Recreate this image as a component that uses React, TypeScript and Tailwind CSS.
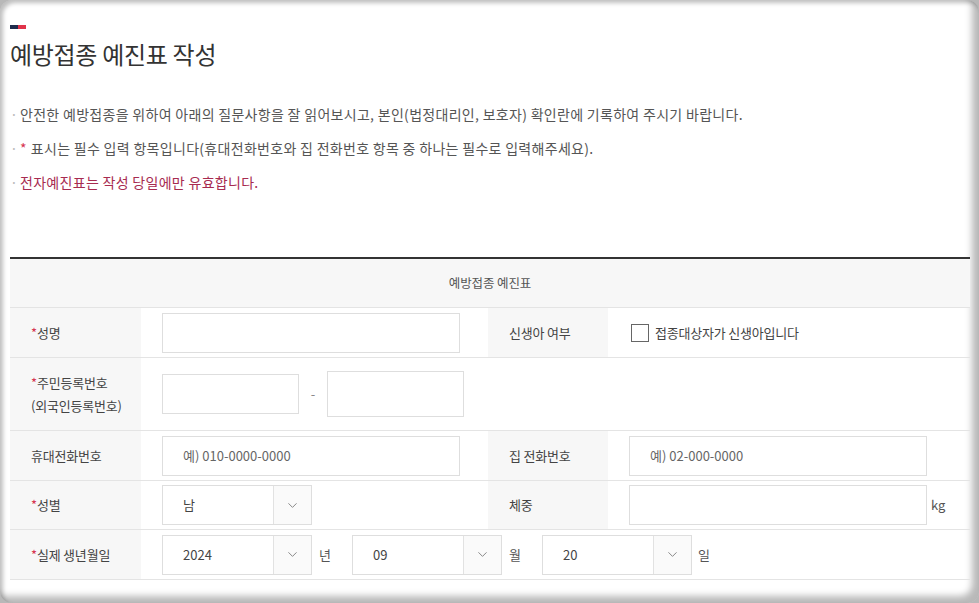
import { ChevronDown } from "lucide-react";

const font = { fontFamily: '"Noto Sans CJK KR", "Noto Sans", sans-serif' };

const Req = () => <span className="text-[#d6334f]">*</span>;

const LabelCell = ({ children, w }: { children: React.ReactNode; w: string }) => (
  <div className={`${w} flex h-full shrink-0 flex-col justify-center bg-[#f7f7f7] pl-[21px] text-[13px] tracking-[-0.2px] text-[#444]`}>
    {children}
  </div>
);

const TextBox = ({ w = "w-[298px]", h = "h-[40px]", placeholder = "" }: { w?: string; h?: string; placeholder?: string }) => (
  <div className={`${w} ${h} flex items-center border border-[#dedede] bg-white pl-[20px] text-[13px] tracking-[0px] text-[#666]`}>
    {placeholder}
  </div>
);

const SelectBox = ({ value }: { value: string }) => (
  <div className="flex h-[40px] w-[150px] border border-[#dedede] bg-white">
    <div className="flex flex-1 items-center pl-[20px] text-[13px] text-[#444]">{value}</div>
    <div className="flex w-[38px] items-center justify-center border-l border-[#e2e2e2] bg-[#fafafa]">
      <ChevronDown size={15} strokeWidth={1.4} className="text-[#777]" />
    </div>
  </div>
);

export default function App() {
  return (
    <div className="h-[603px] w-[979px] bg-[#b8b8b8]" style={font}>
      <div className="h-[603px] w-[979px] rounded-[12px] bg-white px-[10px] pt-[25px] shadow-[inset_3px_3px_4px_rgba(0,0,0,0.25),inset_-7px_-7px_7px_rgba(0,0,0,0.28)]">
        <div className="flex h-[4px] w-[16px]">
          <div className="w-1/2 bg-[#1f2c4c]" />
          <div className="w-1/2 bg-[#e0334a]" />
        </div>
        <h1 className="mt-[9px] text-[24px] leading-[32px] font-normal tracking-[-0.3px] text-[#333]">
          예방접종 예진표 작성
        </h1>
        <ul className="mt-[34px] space-y-[13px] text-[14px] leading-[21px] tracking-[0.3px]">
          <li className="flex text-[#555]">
            <span className="w-[10px] text-[#bbb]">·</span>
            안전한 예방접종을 위하여 아래의 질문사항을 잘 읽어보시고, 본인(법정대리인, 보호자) 확인란에 기록하여 주시기 바랍니다.
          </li>
          <li className="flex text-[#555]">
            <span className="w-[10px] text-[#bbb]">·</span>
            <span className="mr-[4px] text-[#d6334f]">*</span>표시는 필수 입력 항목입니다(휴대전화번호와 집 전화번호 항목 중 하나는 필수로 입력해주세요).
          </li>
          <li className="flex text-[#a72b50]">
            <span className="w-[10px] text-[#bbb]">·</span>
            전자예진표는 작성 당일에만 유효합니다.
          </li>
        </ul>

        <div className="mt-[64px] w-[960px] border-t-2 border-[#333]">
          <div className="flex h-[49px] items-center justify-center border-b border-[#e4e4e4] bg-[#f7f7f7] text-[12.5px] tracking-[-0.1px] text-[#555]">
            예방접종 예진표
          </div>

          <div className="flex h-[50px] items-center border-b border-[#e4e4e4]">
            <LabelCell w="w-[131px]">
              <div><Req />성명</div>
            </LabelCell>
            <div className="flex w-[347px] items-center pl-[21px]">
              <TextBox />
            </div>
            <LabelCell w="w-[120px]">신생아 여부</LabelCell>
            <div className="flex flex-1 items-center pl-[23px] text-[13px] tracking-[-0.2px] text-[#444]">
              <div className="mr-[6px] h-[18px] w-[18px] border border-[#666] bg-white" />
              접종대상자가 신생아입니다
            </div>
          </div>

          <div className="flex h-[73px] items-center border-b border-[#e4e4e4]">
            <LabelCell w="w-[131px]">
              <div className="leading-[23px]"><Req />주민등록번호</div>
              <div className="leading-[23px]">(외국인등록번호)</div>
            </LabelCell>
            <div className="flex flex-1 items-center pl-[21px]">
              <TextBox w="w-[137px]" />
              <span className="w-[28px] text-center text-[13px] text-[#888]">-</span>
              <TextBox w="w-[137px]" h="h-[46px]" />
            </div>
          </div>

          <div className="flex h-[50px] items-center border-b border-[#e4e4e4]">
            <LabelCell w="w-[131px]">휴대전화번호</LabelCell>
            <div className="flex w-[347px] items-center pl-[21px]">
              <TextBox placeholder="예) 010-0000-0000" />
            </div>
            <LabelCell w="w-[120px]">집 전화번호</LabelCell>
            <div className="flex flex-1 items-center pl-[21px]">
              <TextBox placeholder="예) 02-000-0000" />
            </div>
          </div>

          <div className="flex h-[49px] items-center border-b border-[#e4e4e4]">
            <LabelCell w="w-[131px]">
              <div><Req />성별</div>
            </LabelCell>
            <div className="flex w-[347px] items-center pl-[21px]">
              <SelectBox value="남" />
            </div>
            <LabelCell w="w-[120px]">체중</LabelCell>
            <div className="flex flex-1 items-center pl-[21px] text-[13px] text-[#555]">
              <TextBox />
              <span className="ml-[4px]">kg</span>
            </div>
          </div>

          <div className="flex h-[50px] items-center border-b border-[#e4e4e4]">
            <LabelCell w="w-[131px]">
              <div><Req />실제 생년월일</div>
            </LabelCell>
            <div className="flex flex-1 items-center pl-[21px] text-[13px] text-[#555]">
              <SelectBox value="2024" />
              <span className="ml-[7px] w-[33px]">년</span>
              <SelectBox value="09" />
              <span className="ml-[7px] w-[33px]">월</span>
              <SelectBox value="20" />
              <span className="ml-[6px]">일</span>
            </div>
          </div>
        </div>
      </div>
    </div>
  );
}
